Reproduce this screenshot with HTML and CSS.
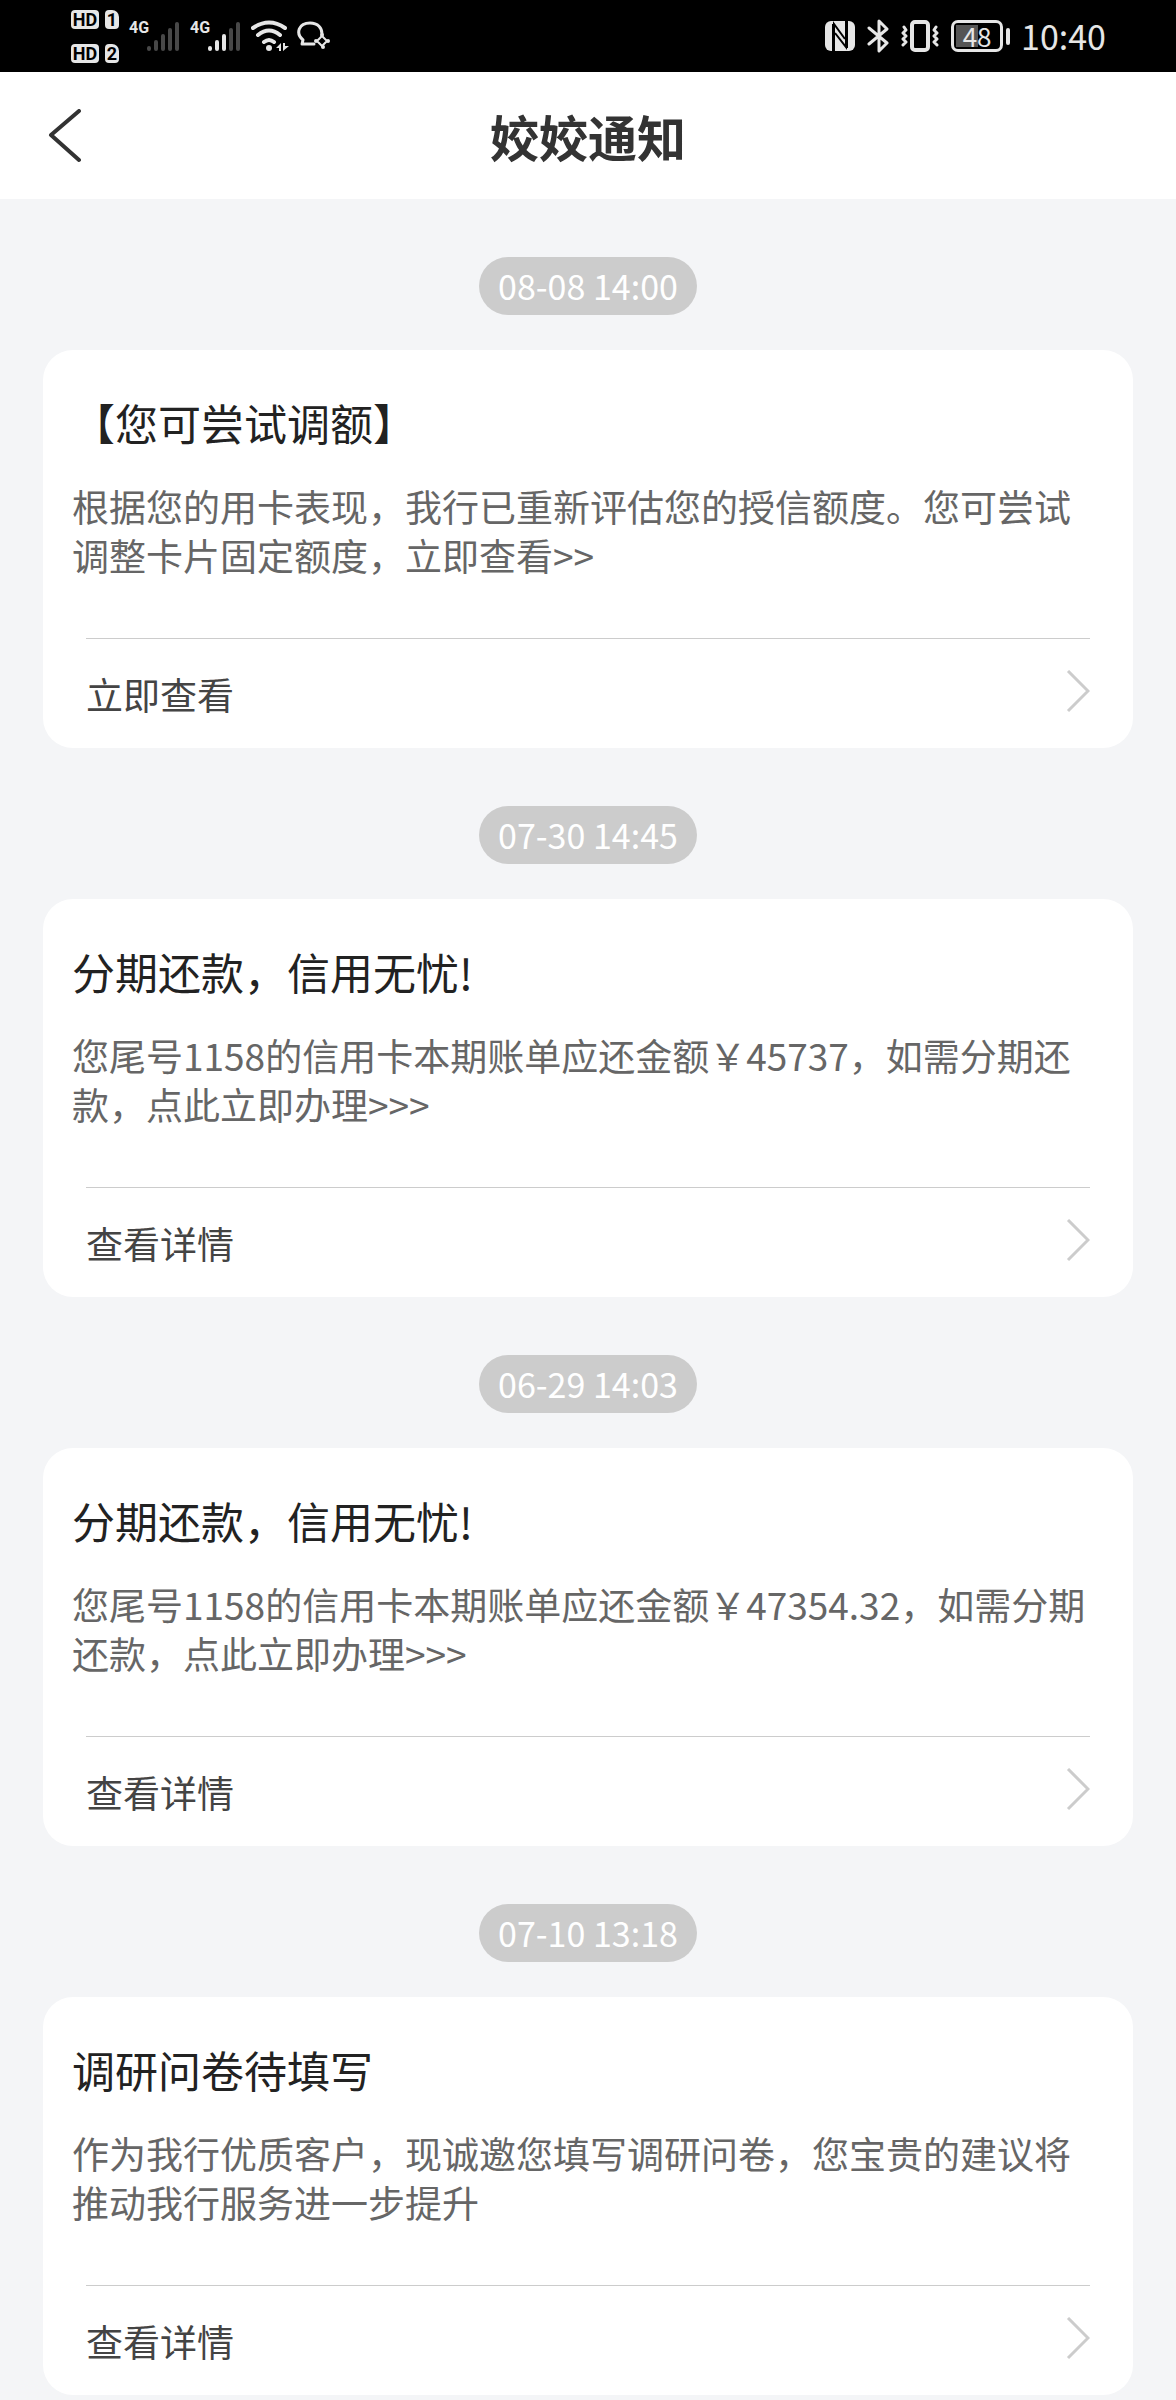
FILE: index.html
```html
<!DOCTYPE html>
<html lang="zh-CN">
<head>
<meta charset="utf-8">
<meta name="viewport" content="width=device-width, initial-scale=1">
<title>姣姣通知</title>
<link rel="stylesheet" href="styles.css">
</head>
<body>
<div class="status">
  <div class="status-left">
    <div class="sims">
      <div class="sim"><span class="badge hd">HD</span><span class="badge slot">1</span></div>
      <div class="sim"><span class="badge hd">HD</span><span class="badge slot">2</span></div>
    </div>
    <div class="signal">
      <span class="net">4G</span>
      <svg class="bars" width="34" height="32" viewBox="0 0 34 32" aria-hidden="true">
        <g stroke="#484848" stroke-width="4" stroke-linecap="round"><path d="M3 28v1M10 22v7M17 16v13M24 10v19M31 4v25"/></g>
      </svg>
    </div>
    <div class="signal">
      <span class="net">4G</span>
      <svg class="bars" width="34" height="32" viewBox="0 0 34 32" aria-hidden="true">
        <g stroke-width="4" stroke-linecap="round"><path stroke="#484848" d="M24 10v19M31 4v25"/><path stroke="#e6e6e6" d="M3 28v1M10 22v7M17 16v13"/></g>
      </svg>
    </div>
    <svg class="wifi" width="38" height="32" viewBox="0 0 38 32" aria-hidden="true">
      <g fill="none" stroke="#e6e6e6" stroke-width="4" stroke-linecap="round"><path d="M2 8Q18 -3 34 8M7 15Q18 6 29 15M13 22Q18 18 23 22"/></g>
      <circle cx="18" cy="28" r="3" fill="#e6e6e6"/>
      <path fill="#e6e6e6" d="M30 23v8h-2v-3h-3zM32 23v8l6-5h-4v-3z"/>
    </svg>
    <svg class="chat" width="34" height="30" viewBox="0 0 34 30" aria-hidden="true">
      <path fill="none" stroke="#e6e6e6" stroke-width="3" stroke-linecap="round" stroke-linejoin="round" d="M18 23H6l1-4C-1 12 3 2 14 2c8 0 12 5 12 11"/>
      <path fill="none" stroke="#e6e6e6" stroke-width="2" d="M26 15l5 5-5 5-5-5z"/>
      <g fill="#e6e6e6"><circle cx="26" cy="14" r="2"/><circle cx="32" cy="20" r="2"/><circle cx="20" cy="20" r="2"/><circle cx="27" cy="26" r="2"/></g>
    </svg>
  </div>
  <div class="status-right">
    <svg width="30" height="32" viewBox="0 0 30 32" aria-hidden="true">
      <rect x="0" y="1" width="30" height="30" rx="6" fill="#e6e6e6"/>
      <path fill="none" stroke="#000" stroke-width="2" d="M9 31V4l11 15M21 1v26L10 13"/>
      <path fill="none" stroke="#000" stroke-width="2" d="M8 31V4M22 1v27"/>
    </svg>
    <svg width="22" height="34" viewBox="0 0 22 34" aria-hidden="true">
      <path fill="none" stroke="#e6e6e6" stroke-width="3" stroke-linecap="round" stroke-linejoin="round" d="M2 9l18 15-8 8V2l8 8L2 25"/>
    </svg>
    <svg width="38" height="32" viewBox="0 0 38 32" aria-hidden="true">
      <rect x="11" y="2" width="16" height="28" rx="3" fill="none" stroke="#e6e6e6" stroke-width="4"/>
      <path fill="none" stroke="#e6e6e6" stroke-width="3" stroke-linecap="round" stroke-linejoin="round" d="M3 7l2 3-3 3 3 3-3 3 3 3-3 3M35 7l-2 3 3 3-3 3 3 3-3 3 3 3"/>
    </svg>
    <div class="battery"><span class="cell">48</span><span class="cap"></span></div>
    <time class="clock">10:40</time>
  </div>
</div>
<header class="topbar">
  <button class="back" type="button" aria-label="返回">
    <svg width="34" height="54" viewBox="0 0 34 54" aria-hidden="true"><path fill="none" stroke="#333" stroke-width="4" stroke-linecap="round" stroke-linejoin="round" d="M31 2L3 26l28 25"/></svg>
  </button>
  <h1 class="heading">姣姣通知</h1>
</header>
<main class="feed">
  <time class="stamp">08-08 14:00</time>
  <article class="card">
    <h2 class="title">【您可尝试调额】</h2>
    <p class="text">根据您的用卡表现，我行已重新评估您的授信额度。您可尝试调整卡片固定额度，立即查看&gt;&gt;</p>
    <a class="more" href="#">立即查看<svg class="chevron" width="24" height="48" viewBox="0 0 24 48" aria-hidden="true"><path d="M2 1l20 20L2 41"/></svg></a>
  </article>
  <time class="stamp">07-30 14:45</time>
  <article class="card">
    <h2 class="title">分期还款，信用无忧!</h2>
    <p class="text">您尾号1158的信用卡本期账单应还金额￥45737，如需分期还款，点此立即办理&gt;&gt;&gt;</p>
    <a class="more" href="#">查看详情<svg class="chevron" width="24" height="48" viewBox="0 0 24 48" aria-hidden="true"><path d="M2 1l20 20L2 41"/></svg></a>
  </article>
  <time class="stamp">06-29 14:03</time>
  <article class="card">
    <h2 class="title">分期还款，信用无忧!</h2>
    <p class="text">您尾号1158的信用卡本期账单应还金额￥47354.32，如需分期还款，点此立即办理&gt;&gt;&gt;</p>
    <a class="more" href="#">查看详情<svg class="chevron" width="24" height="48" viewBox="0 0 24 48" aria-hidden="true"><path d="M2 1l20 20L2 41"/></svg></a>
  </article>
  <time class="stamp">07-10 13:18</time>
  <article class="card">
    <h2 class="title">调研问卷待填写</h2>
    <p class="text">作为我行优质客户，现诚邀您填写调研问卷，您宝贵的建议将推动我行服务进一步提升</p>
    <a class="more" href="#">查看详情<svg class="chevron" width="24" height="48" viewBox="0 0 24 48" aria-hidden="true"><path d="M2 1l20 20L2 41"/></svg></a>
  </article>
</main>
</body>
</html>
```
FILE: styles.css
```css
* {
  box-sizing: border-box;
}

body {
  margin: 0;
  background: #f4f5f7;
  font-family: "Noto Sans CJK SC", sans-serif;
}

svg {
  display: block;
  flex: none;
}

/* Phone status bar */
.status {
  display: flex;
  justify-content: space-between;
  height: 72px;
  padding: 0 70px 0 71px;
  background: #000;
  color: #e6e6e6;
}

.status-left,
.status-right {
  display: flex;
  align-items: center;
}

.sims {
  display: flex;
  flex-direction: column;
  gap: 15px;
  margin-right: 10px;
}

.sim {
  display: flex;
  gap: 6px;
}

.badge {
  height: 19px;
  border-radius: 4px;
  background: #e6e6e6;
  color: #000;
  font: bold 18px/19px Roboto, sans-serif;
  text-align: center;
}

.hd {
  width: 28px;
}

.slot {
  width: 14px;
  border-top-right-radius: 7px;
}

.signal {
  display: flex;
  margin-right: 10px;
}

.net {
  width: 17px;
  font: bold 16px/16px Roboto, sans-serif;
}

.wifi {
  margin-right: 7px;
}

.status-right svg {
  margin-right: 12px;
}

.battery {
  display: flex;
  align-items: center;
  gap: 3px;
  margin-right: 11px;
}

.cell {
  width: 52px;
  height: 32px;
  border: 3px solid #e6e6e6;
  border-radius: 7px;
  background: linear-gradient(90deg, #555 22px, #000 22px) 2px 2px / 42px 22px no-repeat;
  font-size: 26px;
  line-height: 26px;
  text-align: center;
}

.cap {
  width: 4px;
  height: 17px;
  border-radius: 2px;
  background: #e6e6e6;
}

.clock {
  font-size: 34px;
  line-height: 72px;
}

/* Title bar */
.topbar {
  display: grid;
  grid-template-columns: 1fr auto 1fr;
  align-items: center;
  height: 127px;
  padding: 0 48px;
  background: #fff;
}

.back {
  justify-self: start;
  padding: 0;
  border: 0;
  background: none;
}

.heading {
  grid-column: 2;
  margin: 0;
  color: #333;
  font-size: 49px;
  font-weight: 700;
  line-height: 72px;
}

/* Message feed */
.feed {
  display: flex;
  flex-direction: column;
  align-items: center;
  padding: 0 43px 6px;
}

.stamp {
  margin: 58px 0 35px;
  padding: 0 19px;
  border-radius: 29px;
  background: #ccc;
  color: #fff;
  font-size: 34px;
  line-height: 58px;
}

.card {
  width: 100%;
  padding: 40px 29px 0;
  border-radius: 30px;
  background: #fff;
}

.title {
  margin: 0 0 28px;
  color: #222;
  font-size: 43px;
  font-weight: 400;
  line-height: 64px;
}

.text {
  margin: 0;
  color: #666;
  font-size: 37px;
  line-height: 49px;
}

.more {
  display: flex;
  align-items: center;
  justify-content: space-between;
  height: 110px;
  margin: 58px 14px 0;
  border-top: 1px solid #ccc;
  color: #444;
  font-size: 37px;
  text-decoration: none;
}

.chevron {
  fill: none;
  stroke: #ccc;
  stroke-width: 3;
}
```
